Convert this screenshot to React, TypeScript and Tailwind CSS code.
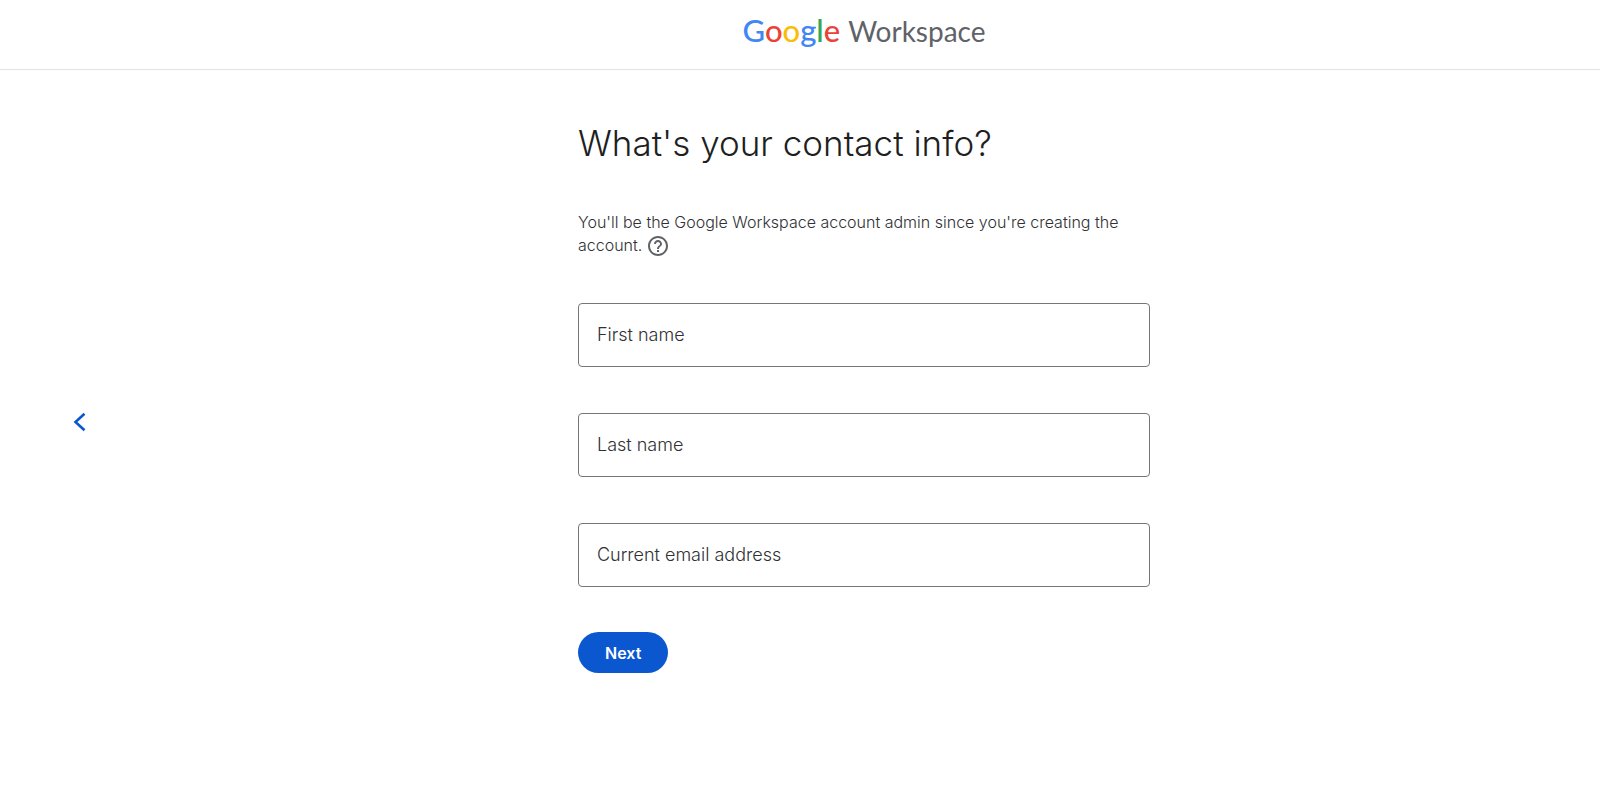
const fields = [
  { id: "first-name", label: "First name", type: "text" },
  { id: "last-name", label: "Last name", type: "text" },
  { id: "email", label: "Current email address", type: "email" },
];

const Logo = () => {
  return (
    <a
      href="#"
      aria-label="Google Workspace"
      className="flex items-baseline gap-2 font-['Lato',sans-serif] leading-10"
    >
      <span className="text-[31px] font-medium">
        <span className="text-[#4285f4]">G</span>
        <span className="text-[#ea4335]">o</span>
        <span className="text-[#fbbc04]">o</span>
        <span className="text-[#4285f4]">g</span>
        <span className="text-[#34a853]">l</span>
        <span className="text-[#ea4335]">e</span>
      </span>
      <span className="text-[28px] text-[#5f6368]">Workspace</span>
    </a>
  );
};

const HelpIcon = () => {
  return (
    <svg viewBox="0 0 24 24" fill="#5f6368" className="h-6 w-6">
      <path d="M11 18h2v-2h-2v2zm1-16C6.48 2 2 6.48 2 12s4.48 10 10 10 10-4.48 10-10S17.52 2 12 2zm0 18c-4.41 0-8-3.59-8-8s3.59-8 8-8 8 3.59 8 8-3.59 8-8 8zm0-14c-2.21 0-4 1.79-4 4h2c0-1.1.9-2 2-2s2 .9 2 2c0 2-3 1.75-3 5h2c0-2.25 3-2.5 3-5 0-2.21-1.79-4-4-4z" />
    </svg>
  );
};

const Field = ({ id, label, type }: { id: string; label: string; type: string }) => {
  return (
    <div className="relative">
      <input
        id={id}
        type={type}
        placeholder=" "
        className="peer block h-16 w-full rounded border border-[#747775] px-[18px] text-[18px] text-[#1f1f1f] focus:border-[#0b57d0] focus:outline-none"
      />
      <label
        htmlFor={id}
        className="pointer-events-none absolute inset-y-0 left-[19px] hidden items-center pb-[2px] text-[18px] font-light text-[#303134] peer-placeholder-shown:flex"
      >
        {label}
      </label>
    </div>
  );
};

export default function App() {
  return (
    <div className="flex min-h-screen flex-col bg-white font-['Inter',sans-serif]">
      <header className="flex h-[70px] justify-center border-b border-[#e3e3e3] pt-[10px] pl-32">
        <Logo />
      </header>

      <main className="flex flex-1 items-stretch">
        <div className="flex w-32 shrink-0 items-center justify-end pr-6 pb-3">
          <button
            type="button"
            aria-label="Back"
            className="flex h-12 w-12 items-center justify-center rounded-full"
          >
            <svg
              viewBox="0 0 24 24"
              fill="none"
              stroke="#0b57d0"
              strokeWidth="2.6"
              className="h-6 w-6"
            >
              <path d="M16.500 3.800 7.500 12l9 8.200" />
            </svg>
          </button>
        </div>

        <div className="flex flex-1 justify-center px-4 pb-12">
          <form className="w-full max-w-[572px]">
            <h1 className="pt-[49px] text-[35px] leading-[48px] font-light text-[#1f1f1f]">
              What's your contact info?
            </h1>

            <p className="mt-11 text-[16px] leading-[23px] font-light text-[#303134]">
              You'll be the Google Workspace account admin since you're creating the account.
              <button type="button" aria-label="Help" className="ml-1 inline-block h-6 align-top">
                <HelpIcon />
              </button>
            </p>

            <div className="mt-[45px] flex flex-col gap-[46px]">
              {fields.map((field) => (
                <Field key={field.id} {...field} />
              ))}
            </div>

            <button
              type="submit"
              className="mt-[45px] h-[41px] rounded-full bg-[#0b57d0] px-[27px] text-[16px] font-semibold text-white"
            >
              Next
            </button>
          </form>
        </div>
      </main>
    </div>
  );
}
